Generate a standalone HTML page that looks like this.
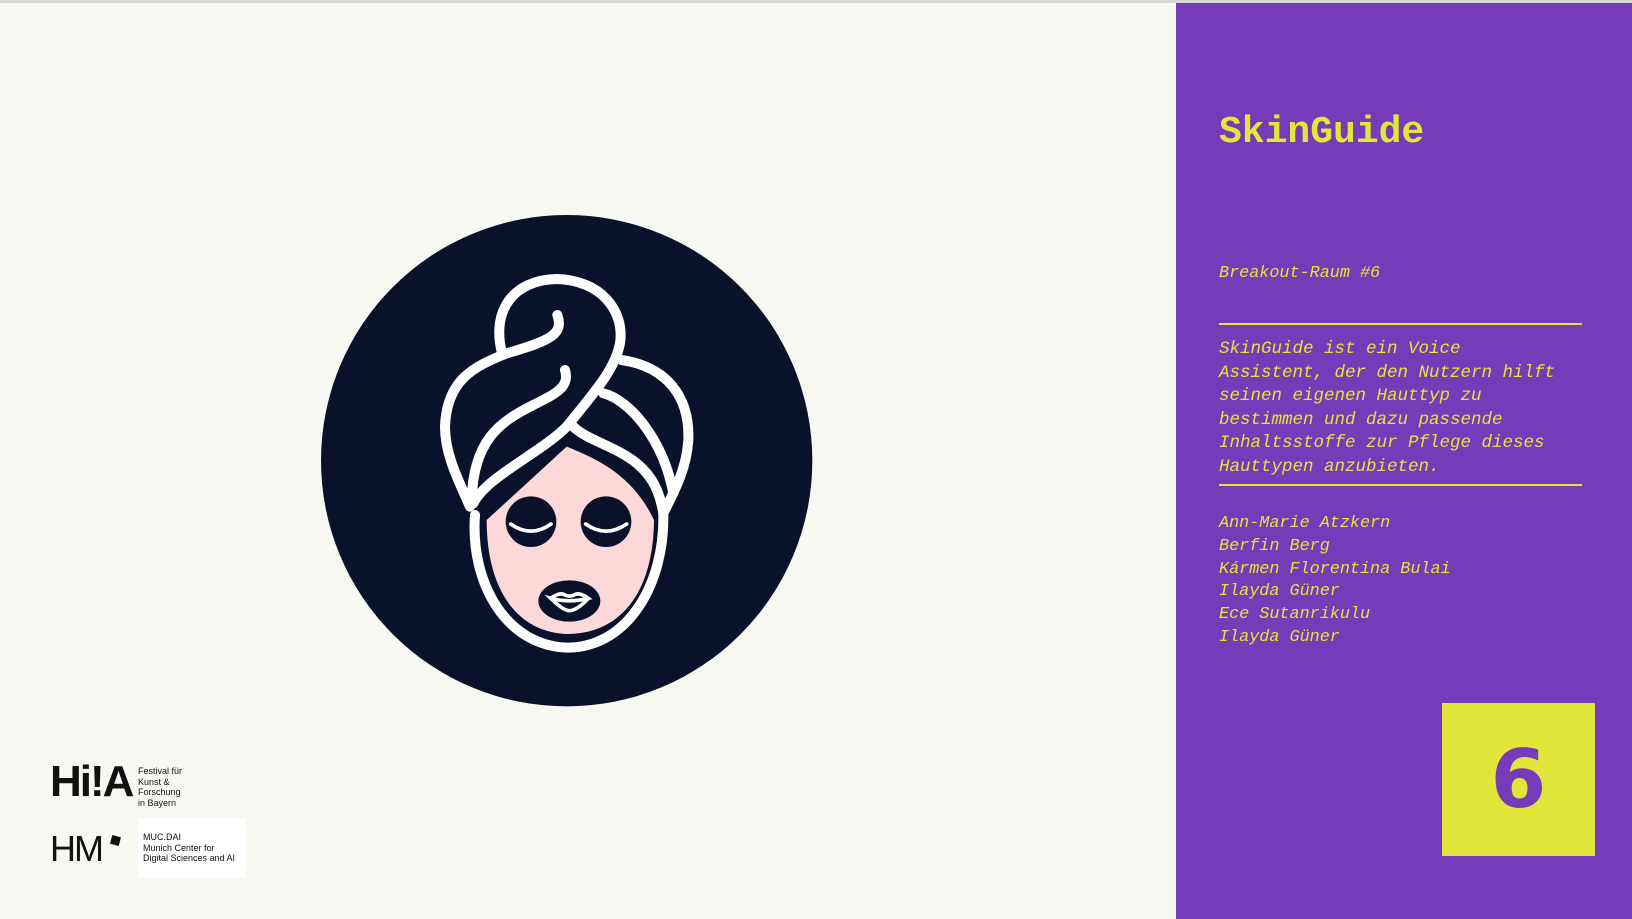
<!DOCTYPE html>
<html><head><meta charset="utf-8"><style>
html,body{margin:0;padding:0}
body{width:1632px;height:919px;background:#f8f8f3;position:relative;overflow:hidden;font-family:"Liberation Mono",monospace}
.topline{position:absolute;left:0;top:0;width:1632px;height:3px;background:#d8d8d8}
.purple{position:absolute;left:1176px;top:3px;width:456px;height:916px;background:#763bb8}
.y{color:#e2e63a;position:absolute;left:1219px;margin:0;white-space:pre}
h1.y{top:108px;font-size:38px;font-weight:bold;line-height:50px}
.br{top:264px;font-size:16.8px;font-style:italic}
.p{top:338px;font-size:17.5px;line-height:23.6px;font-style:italic}
.n{top:513px;font-size:16.8px;line-height:22.8px;font-style:italic}
.hr{position:absolute;left:1219px;width:363px;height:2px;background:#e2e63a}
.box{position:absolute;left:1442px;top:703px;width:153px;height:153px;background:#e2e63a;color:#763bb8;font-family:"DejaVu Sans",sans-serif;font-weight:bold;font-size:80px;text-align:center;line-height:153px}
.lg{position:absolute;font-family:"Liberation Sans",sans-serif;color:#111}
</style></head><body>
<div class="topline"></div>
<svg style="position:absolute;left:300px;top:200px" width="520" height="520" viewBox="0 0 1560 1560">
<circle cx="800" cy="782" r="737" fill="#0a112b"/>
<path d="M800,740 L560,960 C560,1180 660,1300 805,1302 C960,1300 1060,1180 1062,960 C1000,830 900,780 800,740Z" fill="#fdd8d8"/>
<g fill="none" stroke="#fff" stroke-width="30" stroke-linecap="round" stroke-linejoin="round">
<path d="M605,455 C575,330 640,240 770,237 C900,240 975,330 960,430 C945,510 880,580 800,680 C720,760 560,830 520,910"/>
<path d="M772,345 C790,400 760,420 620,460 C520,500 440,540 435,680 C435,760 470,830 510,920"/>
<path d="M795,510 C810,560 770,580 700,615 C600,665 520,720 515,900"/>
<path d="M965,480 C1100,500 1170,590 1165,720 C1160,800 1130,860 1095,930"/>
<path d="M910,580 C990,600 1090,720 1120,880"/>
<path d="M820,680 C860,720 950,740 1010,790 C1060,830 1080,880 1090,940"/>
<path d="M525,945 C510,1150 620,1340 805,1343 C985,1340 1095,1150 1090,940"/>
</g>
<circle cx="693" cy="965" r="76" fill="#0a112b"/>
<circle cx="918" cy="965" r="76" fill="#0a112b"/>
<ellipse cx="808" cy="1203" rx="93" ry="62" fill="#0a112b"/>
<g fill="none" stroke="#fff" stroke-width="11" stroke-linecap="round">
<path d="M632,972 Q693,1015 753,972"/>
<path d="M857,972 Q918,1015 980,972"/>
<path d="M752,1195 Q780,1175 795,1185 Q808,1192 822,1185 Q838,1175 865,1195 Q808,1210 752,1195 Q790,1232 808,1232 Q830,1232 865,1195"/>
</g>
</svg>
<div class="lg" style="left:50px;top:757px;font-size:44px;letter-spacing:-2px;font-weight:bold">Hi!A</div>
<div class="lg" style="left:138px;top:766px;font-size:9px;line-height:10.5px">Festival für<br>Kunst &amp;<br>Forschung<br>in Bayern</div>
<div class="lg" style="left:50px;top:828px;font-size:36px;letter-spacing:-2px">HM</div>
<div style="position:absolute;left:111px;top:836px;width:9px;height:9px;background:#111;transform:rotate(15deg)"></div>
<div style="position:absolute;left:138px;top:818px;width:108px;height:60px;background:#fff"></div>
<div class="lg" style="left:143px;top:832px;font-size:9px;line-height:10.5px">MUC.DAI<br>Munich Center for<br>Digital Sciences and AI</div>
<div class="purple"></div>
<h1 class="y">SkinGuide</h1>
<div class="y br">Breakout-Raum #6</div>
<div class="hr" style="top:323px"></div>
<div class="y p">SkinGuide ist ein Voice
Assistent, der den Nutzern hilft
seinen eigenen Hauttyp zu
bestimmen und dazu passende
Inhaltsstoffe zur Pflege dieses
Hauttypen anzubieten.</div>
<div class="hr" style="top:484px"></div>
<div class="y n">Ann-Marie Atzkern
Berfin Berg
Kármen Florentina Bulai
Ilayda Güner
Ece Sutanrikulu
Ilayda Güner</div>
<div class="box">6</div>
</body></html>
